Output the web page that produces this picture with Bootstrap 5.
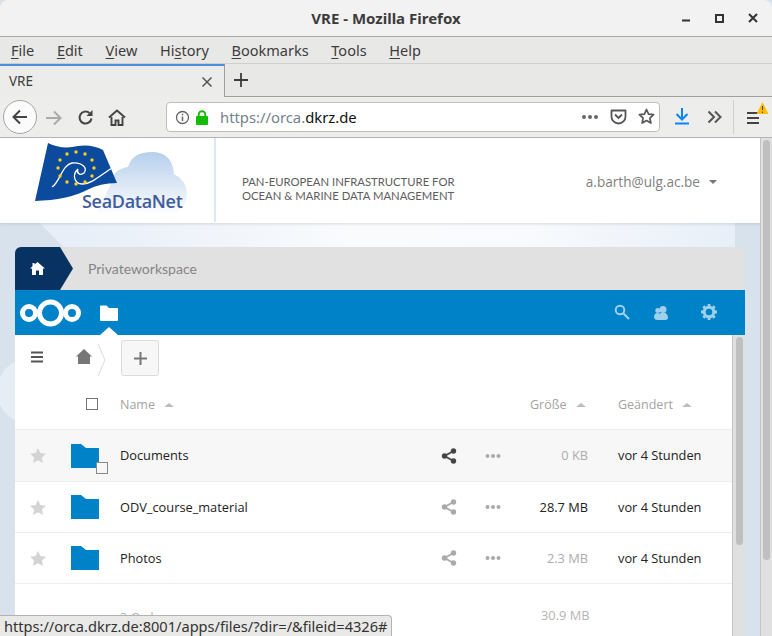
<!DOCTYPE html>
<html lang="en">
<head>
<meta charset="UTF-8">
<title>VRE - Mozilla Firefox</title>
<link href="https://cdn.jsdelivr.net/npm/bootstrap@5.3.3/dist/css/bootstrap.min.css" rel="stylesheet">
<style>
html, body { height: 636px; overflow: hidden; }
body { background: #d8e2ec; font-family: "Open Sans", sans-serif; font-size: 12.8px; color: #1d1d1d; }
.ui-font { font-family: "Noto Sans", "Open Sans", sans-serif; }
.title-bar { height: 37px; background: #f2f2f2; border-bottom: 1px solid #a9a9a7; border-radius: 8px 8px 0 0; font-size: 15px; font-weight: 700; color: #3c3c3c; position: relative; }
.win-btns { position: absolute; right: 0; top: 0; height: 36px; }
.win-btns svg { position: absolute; top: 11px; }
.menu-bar { height: 27px; background: #e8e8e7; border-bottom: 1px solid #cfcfcd; font-size: 14.5px; color: #3c3c3c; padding: 1px 0 0 11px; gap: 22.700px; }
.menu-bar u { text-underline-offset: 2px; }
.tab-bar { height: 33px; background: #e8e8e7; border-bottom: 1px solid #9f9f9d; }
.tab-on { width: 225px; height: 33px; background: #ececeb; border-top: 2px solid #4a90d9; border-right: 1px solid #9f9f9d; padding: 0 11px 0 9px; font-size: 13.5px; color: #3c3c3c; }
.tool-bar { height: 41px; background: #ededec; border-bottom: 1px solid #b4b4b2; position: relative; }
.back-btn { width: 34px; height: 34px; margin-left: 3px; border: 1px solid #a5a5a5; border-radius: 50%; background: #fbfbfb; }
.url-box { position: absolute; left: 166px; top: 5px; width: 494px; height: 30px; background: #fff; border: 1px solid #bdbdbd; border-radius: 4px; font-size: 14.8px; }
.url-dim { color: #76828f; margin-left: 11px; }
.url-dark { color: #111; }
.lock-gap { margin-left: 5px; }
.tool-abs { position: absolute; }
.page-wrap { position: relative; height: 498px; overflow: hidden; }
.cloud-a { position: absolute; left: -3px; top: 220px; width: 66px; height: 66px; border-radius: 50%; background: #e7edf5; }
.cloud-b { position: absolute; left: 40px; top: 85px; width: 695px; height: 26px; background: linear-gradient(90deg, #e6edf7, #f9fbfd 45%, #f8fafd 70%, #e8eff8); clip-path: polygon(0 0, 100% 0, 100% 100%, 25px 100%); }
.site-head { position: relative; height: 85px; background: #fff; box-shadow: 0 1px 3px rgba(0,0,0,.12); }
.head-logo { width: 216px; height: 84px; position: relative; border-right: 2px solid #dce8f4; flex: none; }
.logo-svg { position: absolute; left: 0; top: 0; }
.logo-text { position: absolute; left: 82px; top: 50px; font-size: 18px; font-weight: 600; color: #3f5c9c; letter-spacing: -.3px; line-height: 27px; }
.head-claim { margin-left: 26px; padding-top: 37px; font-family: "Lato", sans-serif; font-size: 11.300px; line-height: 14px; color: #5d5d5d; }
.head-user { margin-left: auto; padding: 34px 0 0 0; margin-right: 55px; color: #7f7f7f; font-size: 13.6px; }
.user-caret { display: inline-block; margin-left: 9px; vertical-align: 3px; border: 4px solid transparent; border-top: 4px solid #777; border-bottom: 0; }
.app-box { position: absolute; left: 15px; top: 109px; width: 730px; }
.crumb-bar { height: 43px; background: #e1e1e1; border-radius: 6px 6px 0 0; position: relative; }
.crumb-home { width: 45px; height: 43px; background: #083261; border-radius: 6px 0 0 0; position: relative; padding-left: 15px; }
.crumb-home::after { content: ""; position: absolute; left: 45px; top: 0; width: 13px; height: 43px; background: #083261; clip-path: polygon(0 0, 100% 50%, 0 100%); }
.crumb-text { margin-left: 28px; font-family: "Lato", sans-serif; font-size: 14px; color: #858585; }
.cloud-bar { height: 45px; background: #0082c9; position: relative; }
.nc-folder { margin-left: 17px; }
.nc-caret { position: absolute; left: 85px; bottom: 0; border: 8px solid transparent; border-bottom: 8px solid #fff; border-top: 0; border-left-width: 9px; border-right-width: 9px; }
.nc-tool { position: absolute; top: 14px; }
.files-box { width: 717px; height: 301px; background: #fff; position: relative; }
.bar-track { position: absolute; left: 717px; top: 88px; width: 13px; height: 301px; background: #e0e0e0; border-left: 1px solid #c4c4c4; }
.bar-thumb { position: absolute; left: 3px; top: 2px; width: 7px; height: 208px; background: #bfbfbf; border-radius: 4px; }
.page-track { position: absolute; right: 0; top: 0; width: 12px; height: 498px; background: #e0e0e0; border-left: 1px solid #c4c4c4; }
.page-thumb { position: absolute; left: 2px; top: 2px; width: 7px; height: 420px; background: #bfbfbf; border-radius: 4px; }
.files-tools { height: 45px; position: relative; }
.tool-menu { position: absolute; left: 16px; top: 16px; }
.tool-home { position: absolute; left: 61px; top: 14px; }
.add-btn { position: absolute; left: 106px; top: 5px; width: 38px; height: 36px; background: #f7f7f7; border: 1px solid #dbdbdb; border-radius: 3px; }
.crumb-sep { position: absolute; left: 82px; top: 4px; }
.files-head { height: 50px; border-bottom: 1px solid #eee; color: #a3a3a3; font-size: 12.5px; position: relative; }
.head-check { position: absolute; left: 71px; top: 18px; width: 12px; height: 12px; border: 1px solid #777; background: #fff; }
.head-cell { position: absolute; top: 16px; }
.cell-name { left: 105px; }
.cell-size { left: 515px; }
.cell-date { left: 603px; }
.sort-up { display: inline-block; margin-left: 9px; vertical-align: 2px; border: 5px solid transparent; border-bottom: 4px solid #bdbdbd; border-top: 0; }
.file-row { height: 51px; border-bottom: 1px solid #eee; position: relative; }
.file-row.is-hover { background: #f7f7f7; height: 52px; }
.row-star { width: 16px; margin-left: 15px; flex: none; }
.row-folder { margin-left: 25px; position: relative; flex: none; width: 28px; height: 24px; }
.row-name { margin-left: 21px; width: 321px; flex: none; color: #222; padding-top: 1px; }
.row-share { width: 16px; flex: none; }
.row-dots { margin-left: 28px; width: 16px; flex: none; }
.row-size { width: 87px; flex: none; text-align: right; color: #adadad; padding-top: 1px; }
.size-dark { color: #222; }
.row-date { margin-left: 30px; color: #222; padding-top: 1px; }
.row-check { position: absolute; left: 25px; top: 18px; width: 12px; height: 12px; background: #f7f7f7; border: 1px solid #888; }
.files-sum { position: relative; height: 52px; color: #b5b5b5; }
.sum-left { position: absolute; left: 105px; top: 24px; }
.sum-right { position: absolute; left: 526px; top: 22px; }
.status-tip { position: absolute; left: 0; bottom: 0; height: 21px; padding: 0 4px; background: #e9e9e7; border: 1px solid #b3b3b1; border-left: 0; border-bottom: 0; border-radius: 0 4px 0 0; font-family: "Noto Sans", sans-serif; font-size: 14.6px; line-height: 21px; color: #333; z-index: 5; white-space: nowrap; }
</style>
</head>
<body>

<div class="title-bar d-flex align-items-center justify-content-center ui-font">VRE - Mozilla Firefox
  <div class="win-btns">
    <svg style="right:80px" width="12" height="12" viewBox="0 0 12 12"><path d="M2 9.500h8" stroke="#333" stroke-width="2"/></svg>
    <svg style="right:46px;top:13px" width="12" height="12" viewBox="0 0 12 12"><rect x="2" y="2" width="7" height="7" fill="none" stroke="#333" stroke-width="2"/></svg>
    <svg style="right:13px;top:12px" width="12" height="12" viewBox="0 0 12 12"><path d="M2 2l8 8M10 2l-8 8" stroke="#333" stroke-width="2"/></svg>
  </div>
</div>

<div class="menu-bar d-flex align-items-center ui-font">
  <span><u>F</u>ile</span><span><u>E</u>dit</span><span><u>V</u>iew</span><span>Hi<u>s</u>tory</span><span><u>B</u>ookmarks</span><span><u>T</u>ools</span><span><u>H</u>elp</span>
</div>

<div class="tab-bar d-flex ui-font">
  <div class="tab-on d-flex align-items-center justify-content-between">
    <span>VRE</span>
    <svg width="12" height="12" viewBox="0 0 12 12"><path d="M1.500 1.500l9 9M10.500 1.500l-9 9" stroke="#555" stroke-width="1.500"/></svg>
  </div>
  <svg class="ms-2 align-self-center" width="16" height="16" viewBox="0 0 16 16"><path d="M8 1v14M1 8h14" stroke="#3c3c3c" stroke-width="1.800"/></svg>
</div>

<div class="tool-bar d-flex align-items-center">
  <div class="back-btn d-flex align-items-center justify-content-center">
    <svg width="18" height="18" viewBox="0 0 18 18"><path d="M16 9H2.500M9 2.500L2.500 9 9 15.500" fill="none" stroke="#444" stroke-width="2"/></svg>
  </div>
  <svg class="tool-abs" style="left:45px;top:12px" width="18" height="18" viewBox="0 0 18 18"><path d="M1 9h14.500M9 2.500L15.500 9 9 15.500" fill="none" stroke="#aaa" stroke-width="2"/></svg>
  <svg class="tool-abs" style="left:77px;top:12px" width="17" height="17" viewBox="0 0 17 17"><path d="M14.500 9.500A6 6 0 1 1 12.500 4" fill="none" stroke="#444" stroke-width="2"/><path d="M15.500 1v6h-6z" fill="#444"/></svg>
  <svg class="tool-abs" style="left:108px;top:12px" width="18" height="17" viewBox="0 0 18 17"><path d="M1 8.500L9 1.500l8 7M3.500 8v8h4v-4.500h3V16h4V8" fill="none" stroke="#444" stroke-width="1.900"/></svg>

  <div class="url-box d-flex align-items-center ui-font">
    <svg class="ms-2" width="15" height="15" viewBox="0 0 15 15"><circle cx="7.500" cy="7.500" r="6" fill="none" stroke="#666" stroke-width="1.300"/><path d="M7.500 6.500v4.500M7.500 3.800v1.500" stroke="#666" stroke-width="1.500"/></svg>
    <svg class="lock-gap" width="14" height="15" viewBox="0 0 14 15"><rect x="1" y="6" width="12" height="9" rx="1" fill="#12bc00"/><path d="M3.700 6.500V4.500a3.300 3.300 0 0 1 6.600 0v2" fill="none" stroke="#12bc00" stroke-width="1.900"/></svg>
    <span class="url-dim">https://orca.</span><span class="url-dark">dkrz.de</span>
  </div>
  <svg class="tool-abs" style="left:581px;top:17px" width="18" height="6" viewBox="0 0 18 6"><circle cx="3" cy="3" r="2" fill="#666"/><circle cx="9" cy="3" r="2" fill="#666"/><circle cx="15" cy="3" r="2" fill="#666"/></svg>
  <svg class="tool-abs" style="left:610px;top:11px" width="17" height="17" viewBox="0 0 17 17"><path d="M1.500 2.500h14v6a7 7 0 0 1-14 0z" fill="none" stroke="#555" stroke-width="1.800" stroke-linejoin="round"/><path d="M5 6.500l3.500 3.500L12 6.500" fill="none" stroke="#555" stroke-width="1.800"/></svg>
  <svg class="tool-abs" style="left:638px;top:11px" width="17" height="17" viewBox="0 0 17 17"><path d="M8.500 1.500l2.100 4.600 5 .6-3.700 3.400 1 5-4.400-2.500-4.400 2.500 1-5L1.400 6.700l5-.6z" fill="none" stroke="#555" stroke-width="1.700" stroke-linejoin="round"/></svg>
  <svg class="tool-abs" style="left:674px;top:10px" width="16" height="18" viewBox="0 0 16 18"><path d="M8 1v11M2.500 7L8 12.500 13.500 7" fill="none" stroke="#0a84ff" stroke-width="2"/><path d="M1 16.500h14" stroke="#0a84ff" stroke-width="2"/></svg>
  <svg class="tool-abs" style="left:707px;top:13px" width="15" height="14" viewBox="0 0 15 14"><path d="M1.500 1.500L7 7l-5.500 5.500M8 1.500L13.500 7 8 12.500" fill="none" stroke="#555" stroke-width="2"/></svg>
  <div class="tool-abs" style="left:733px;top:3px;width:1px;height:34px;background:#cfcfcf"></div>
  <svg class="tool-abs" style="left:747px;top:5px" width="24" height="26" viewBox="0 0 24 26"><path d="M0 11h12M0 16h12M0 21h12" stroke="#444" stroke-width="2"/><path d="M15.500 0l6 12h-12z" fill="#ffbf00"/><path d="M15.500 4v4M15.500 9.500v1.500" stroke="#5b4a00" stroke-width="1.200"/></svg>
</div>

<div class="page-wrap">
  <div class="cloud-b"></div>
  <div class="cloud-a"></div>

  <div class="site-head d-flex">
    <div class="head-logo">
      <svg class="logo-svg" width="213" height="84" viewBox="0 0 213 84">
        <defs>
          <linearGradient id="cloudFill" x1="0" y1="0" x2="0" y2="1"><stop offset="0" stop-color="#b7cfec"/><stop offset="1" stop-color="#ffffff"/></linearGradient>
        </defs>
        <path d="M110 48 Q112 31 128 29 Q132 14 152 14 Q172 14 174 36 Q186 42 187 55 Q187 70 172 78 L95 78 Z" fill="url(#cloudFill)"/>
        <path d="M48 5 Q62 12 78 8 Q92 6 103 12 L117 45 Q100 45 87 52 Q68 62 35 63 Z" fill="#0b4a9c"/>
        <path d="M52 49 C60 44 62 27 72 25 C82 24 88 30 84 35 C80 38 76 35 78 31 C72 36 74 46 82 46 C92 46 102 36 112 30" fill="none" stroke="#fff" stroke-width="1.300"/>
        <g fill="#f7d21a">
          <circle cx="67" cy="16" r="1.700"/><circle cx="76" cy="14" r="1.700"/><circle cx="85" cy="16" r="1.700"/><circle cx="92" cy="22" r="1.700"/><circle cx="94" cy="30" r="1.700"/><circle cx="92" cy="38" r="1.700"/><circle cx="85" cy="44" r="1.700"/><circle cx="76" cy="46" r="1.700"/><circle cx="67" cy="44" r="1.700"/><circle cx="60" cy="38" r="1.700"/><circle cx="58" cy="30" r="1.700"/><circle cx="60" cy="22" r="1.700"/>
        </g>
      </svg>
      <span class="logo-text">SeaDataNet</span>
    </div>
    <div class="head-claim">PAN-EUROPEAN INFRASTRUCTURE FOR<br>OCEAN &amp; MARINE DATA MANAGEMENT</div>
    <div class="head-user">a.barth@ulg.ac.be<span class="user-caret"></span></div>
  </div>

  <div class="app-box">
    <div class="crumb-bar d-flex align-items-center">
      <div class="crumb-home d-flex align-items-center">
        <svg width="15" height="13" viewBox="0 0 15 13"><path d="M2.500 1h2v1.500L7.500 0 15 6.500h-2V13H9V8.500H6V13H2V6.500H0l2.500-2.200z" fill="#fff"/></svg>
      </div>
      <span class="crumb-text">Privateworkspace</span>
    </div>
    <div class="cloud-bar d-flex align-items-center">
      <svg class="ms-1" width="64" height="28" viewBox="0 0 64 28">
        <circle cx="31.500" cy="14" r="11" fill="none" stroke="#fff" stroke-width="5"/>
        <circle cx="10" cy="14" r="6.500" fill="none" stroke="#fff" stroke-width="5"/>
        <circle cx="53" cy="14" r="6.500" fill="none" stroke="#fff" stroke-width="5"/>
      </svg>
      <svg class="nc-folder" width="18" height="16" viewBox="0 0 18 16"><path d="M0 1.500A1 1 0 0 1 1 .5h5.500l2.500 2.500h8a1 1 0 0 1 1 1V15a1 1 0 0 1-1 1H1a1 1 0 0 1-1-1z" fill="#fff"/></svg>
      <span class="nc-caret"></span>
      <svg class="nc-tool" style="left:599px" width="16" height="16" viewBox="0 0 16 16"><circle cx="6" cy="6" r="4.300" fill="none" stroke="#9fd0ec" stroke-width="2"/><path d="M9.500 9.500L15 15" stroke="#9fd0ec" stroke-width="2.200"/></svg>
      <svg class="nc-tool" style="left:639px;top:16px" width="14" height="14" viewBox="0 0 14 14"><circle cx="9" cy="3.500" r="3.500" fill="#9fd0ec"/><circle cx="3.800" cy="4.500" r="2.500" fill="#9fd0ec"/><path d="M0 11c0-2.500 1.500-4 3.500-4 1 0 1.800.3 2.300.8C6.500 7.200 7.600 6.800 9 6.800c3 0 5 2 5 4.700 0 1.500-1 2.500-2.500 2.500h-8C1.500 14 0 13 0 11z" fill="#9fd0ec"/></svg>
      <svg class="nc-tool" style="left:686px" width="16" height="16" viewBox="0 0 16 16"><circle cx="8" cy="8" r="4.800" fill="none" stroke="#9fd0ec" stroke-width="3"/><path d="M8 0v3M8 13v3M0 8h3M13 8h3M2.300 2.300l2.100 2.100M11.600 11.600l2.100 2.100M13.700 2.300l-2.100 2.100M4.400 11.600l-2.100 2.100" stroke="#9fd0ec" stroke-width="2.800"/></svg>
    </div>

    <div class="files-box">
      <div class="files-tools">
        <svg class="tool-menu" width="12" height="12" viewBox="0 0 12 12"><path d="M0 1.500h12M0 6h12M0 10.500h12" stroke="#555" stroke-width="2"/></svg>
        <svg class="tool-home" width="16" height="15" viewBox="0 0 16 15"><path d="M8 0l8 7.500h-2V15H2V7.500H0z" fill="#777"/></svg>
        <svg class="crumb-sep" width="10" height="42" viewBox="0 0 10 42"><path d="M1 5l7 16-7 16" fill="none" stroke="#dcdcdc" stroke-width="1"/></svg>
        <div class="add-btn d-flex align-items-center justify-content-center">
          <svg width="13" height="13" viewBox="0 0 13 13"><path d="M6.500 0v13M0 6.500h13" stroke="#777" stroke-width="2"/></svg>
        </div>
      </div>

      <div class="files-head">
        <span class="head-check"></span>
        <span class="head-cell cell-name">Name<span class="sort-up"></span></span>
        <span class="head-cell cell-size">Größe<span class="sort-up"></span></span>
        <span class="head-cell cell-date">Geändert<span class="sort-up"></span></span>
      </div>

      <div class="file-row is-hover d-flex align-items-center">
        <svg class="row-star" width="16" height="15" viewBox="0 0 16 15"><path d="M8 0l2.400 5 5.600.7-4.100 3.800 1.100 5.500-5-2.800-5 2.800 1.100-5.500L0 5.700 5.600 5z" fill="#d4d4d4"/></svg>
        <div class="row-folder">
          <svg width="28" height="24" viewBox="0 0 28 24"><path d="M0 0h10l5 4h13v20H0z" fill="#0082c9"/></svg>
          <span class="row-check"></span>
        </div>
        <div class="row-name">Documents</div>
        <svg class="row-share" width="16" height="16" viewBox="0 0 16 16"><path d="M12.500 3L3.500 8l9 5" fill="none" stroke="#444" stroke-width="1.800"/><circle cx="12.500" cy="3" r="2.700" fill="#444"/><circle cx="3.500" cy="8" r="2.700" fill="#444"/><circle cx="12.500" cy="13" r="2.700" fill="#444"/></svg>
        <svg class="row-dots" width="16" height="6" viewBox="0 0 16 6"><circle cx="2.500" cy="3" r="2" fill="#aaa"/><circle cx="8" cy="3" r="2" fill="#aaa"/><circle cx="13.500" cy="3" r="2" fill="#aaa"/></svg>
        <div class="row-size">0 KB</div>
        <div class="row-date">vor 4 Stunden</div>
      </div>

      <div class="file-row d-flex align-items-center">
        <svg class="row-star" width="16" height="15" viewBox="0 0 16 15"><path d="M8 0l2.400 5 5.600.7-4.100 3.800 1.100 5.500-5-2.800-5 2.800 1.100-5.500L0 5.700 5.600 5z" fill="#d4d4d4"/></svg>
        <div class="row-folder">
          <svg width="28" height="24" viewBox="0 0 28 24"><path d="M0 0h10l5 4h13v20H0z" fill="#0082c9"/></svg>
        </div>
        <div class="row-name">ODV_course_material</div>
        <svg class="row-share" width="16" height="16" viewBox="0 0 16 16"><path d="M12.500 3L3.500 8l9 5" fill="none" stroke="#aaa" stroke-width="1.800"/><circle cx="12.500" cy="3" r="2.700" fill="#aaa"/><circle cx="3.500" cy="8" r="2.700" fill="#aaa"/><circle cx="12.500" cy="13" r="2.700" fill="#aaa"/></svg>
        <svg class="row-dots" width="16" height="6" viewBox="0 0 16 6"><circle cx="2.500" cy="3" r="2" fill="#aaa"/><circle cx="8" cy="3" r="2" fill="#aaa"/><circle cx="13.500" cy="3" r="2" fill="#aaa"/></svg>
        <div class="row-size size-dark">28.7 MB</div>
        <div class="row-date">vor 4 Stunden</div>
      </div>

      <div class="file-row d-flex align-items-center">
        <svg class="row-star" width="16" height="15" viewBox="0 0 16 15"><path d="M8 0l2.400 5 5.600.7-4.100 3.800 1.100 5.500-5-2.800-5 2.800 1.100-5.500L0 5.700 5.600 5z" fill="#d4d4d4"/></svg>
        <div class="row-folder">
          <svg width="28" height="24" viewBox="0 0 28 24"><path d="M0 0h10l5 4h13v20H0z" fill="#0082c9"/></svg>
        </div>
        <div class="row-name">Photos</div>
        <svg class="row-share" width="16" height="16" viewBox="0 0 16 16"><path d="M12.500 3L3.500 8l9 5" fill="none" stroke="#aaa" stroke-width="1.800"/><circle cx="12.500" cy="3" r="2.700" fill="#aaa"/><circle cx="3.500" cy="8" r="2.700" fill="#aaa"/><circle cx="12.500" cy="13" r="2.700" fill="#aaa"/></svg>
        <svg class="row-dots" width="16" height="6" viewBox="0 0 16 6"><circle cx="2.500" cy="3" r="2" fill="#aaa"/><circle cx="8" cy="3" r="2" fill="#aaa"/><circle cx="13.500" cy="3" r="2" fill="#aaa"/></svg>
        <div class="row-size">2.3 MB</div>
        <div class="row-date">vor 4 Stunden</div>
      </div>

      <div class="files-sum">
        <span class="sum-left">3 Ordner</span>
        <span class="sum-right">30.9 MB</span>
      </div>
    </div>
    <div class="bar-track"><div class="bar-thumb"></div></div>
  </div>

  <div class="page-track"><div class="page-thumb"></div></div>
  <div class="status-tip">https://orca.dkrz.de:8001/apps/files/?dir=/&amp;fileid=4326#</div>
</div>

<script src="https://cdn.jsdelivr.net/npm/bootstrap@5.3.3/dist/js/bootstrap.bundle.min.js"></script>
</body>
</html>
